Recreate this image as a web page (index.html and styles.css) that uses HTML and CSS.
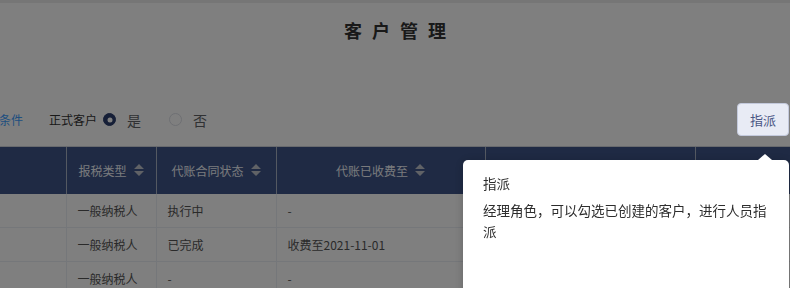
FILE: index.html
```html
<!DOCTYPE html>
<html lang="zh-CN">
<head>
  <meta charset="UTF-8" />
  <title>客户管理</title>
  <link rel="stylesheet" href="styles.css">
</head>
<body>

  <div class="page">
    <div class="top-line"></div>
    <h1 class="page-title">客户管理</h1>

    <div class="filter-bar">
      <a class="filter-link">条件</a>
      <span class="filter-label">正式客户</span>
      <label class="radio checked"><span class="radio-dot"></span><span class="radio-text">是</span></label>
      <label class="radio"><span class="radio-dot"></span><span class="radio-text">否</span></label>
      <button class="btn-assign">指派</button>
    </div>

    <div class="table-wrap">
      <table class="customer-table">
        <colgroup>
          <col style="width: 66px">
          <col style="width: 90px">
          <col style="width: 120px">
          <col style="width: 209px">
          <col style="width: 210px">
          <col style="width: 200px">
        </colgroup>
        <thead>
          <tr>
            <th></th>
            <th><span class="th-cell">报税类型<svg class="sort" viewBox="0 0 10 12"><path d="M5 0 L10 5 L0 5 Z M0 7 L10 7 L5 12 Z"/></svg></span></th>
            <th><span class="th-cell">代账合同状态<svg class="sort" viewBox="0 0 10 12"><path d="M5 0 L10 5 L0 5 Z M0 7 L10 7 L5 12 Z"/></svg></span></th>
            <th><span class="th-cell">代账已收费至<svg class="sort" viewBox="0 0 10 12"><path d="M5 0 L10 5 L0 5 Z M0 7 L10 7 L5 12 Z"/></svg></span></th>
            <th></th>
            <th></th>
          </tr>
        </thead>
        <tbody>
          <tr><td></td><td>一般纳税人</td><td>执行中</td><td>-</td><td></td><td></td></tr>
          <tr><td></td><td>一般纳税人</td><td>已完成</td><td>收费至2021-11-01</td><td></td><td></td></tr>
          <tr><td></td><td>一般纳税人</td><td>-</td><td>-</td><td></td><td></td></tr>
        </tbody>
      </table>
    </div>
  </div>

  <!-- 引导遮罩 -->
  <div class="guide-overlay"></div>
  <div class="guide-popover">
    <div class="guide-title">指派</div>
    <div class="guide-desc">经理角色，可以勾选已创建的客户，进行人员指派</div>
  </div>

</body>
</html>
```

FILE: styles.css
```css
* { margin: 0; padding: 0; box-sizing: border-box; }
html, body {
  height: 100%;
  overflow: hidden;
  background: #fff;
  font-family: 'Noto Sans CJK SC', 'Noto Sans', sans-serif;
  color: #606266;
}

.top-line {
  height: 3px;
  background: #ececec;
}

.page-title {
  margin-top: 14px;
  text-align: center;
  font-size: 18px;
  line-height: 26px;
  font-weight: bold;
  letter-spacing: 10px;
  padding-left: 10px;
  color: #333;
}

.filter-bar {
  display: flex;
  align-items: center;
  height: 33px;
  margin-top: 60px;
  padding-right: 1px;
}

.filter-link {
  color: #409eff;
  font-size: 12px;
  margin-left: -1px;
}

.filter-label {
  margin-left: 26px;
  font-size: 12px;
  color: #333;
}

.radio {
  display: flex;
  align-items: center;
  margin-left: 6px;
  font-size: 14px;
  color: #606266;
}
.radio + .radio { margin-left: 28px; }

.radio-dot {
  width: 13px;
  height: 13px;
  border-radius: 50%;
  border: 1px solid #dcdfe6;
  background: #fff;
  margin-right: 11px;
}
.radio.checked .radio-dot {
  background: #2c3e6e;
  border-color: #2c3e6e;
  position: relative;
}
.radio.checked .radio-dot::after {
  content: '';
  position: absolute;
  left: 50%; top: 50%;
  width: 5px; height: 5px;
  border-radius: 50%;
  background: #fff;
  transform: translate(-50%, -50%);
}

.btn-assign {
  margin-left: auto;
  width: 52px;
  height: 33px;
  border: 1px solid #c3c9dc;
  border-radius: 4px;
  background: #e8ebf5;
  color: #4a5584;
  font-family: inherit;
  font-size: 13px;
  position: relative;
  z-index: 1001;
}

.table-wrap {
  margin-top: 10px;
  width: 100%;
  overflow: hidden;
}

.customer-table {
  width: 895px;
  table-layout: fixed;
  border-collapse: collapse;
  font-size: 12px;
}

.customer-table th {
  height: 47px;
  background: #3e5488;
  color: #f2f5fa;
  font-weight: normal;
  text-align: center;
  border-left: 1px solid #a9b2c4;
  border-top: 1px solid #d0d4dc;
}
.customer-table th:first-child { border-left: none; }

.th-cell {
  display: inline-flex;
  align-items: center;
  gap: 7px;
  white-space: nowrap;
}

.sort {
  width: 10px;
  height: 12px;
  fill: #c0c4cc;
  flex-shrink: 0;
}

.customer-table td {
  height: 34px;
  padding-left: 11px;
  border-left: 1px solid #ebeef5;
  border-bottom: 1px solid #ebeef5;
  color: #555;
  white-space: nowrap;
}
.customer-table td:first-child { border-left: none; }

.guide-overlay {
  position: fixed;
  top: 0; left: 0; right: 0; bottom: 0;
  background: rgba(0, 0, 0, 0.5);
  z-index: 1000;
}

.guide-popover {
  position: fixed;
  left: 463px;
  top: 159.5px;
  width: 326px;
  min-height: 160px;
  padding: 15px 20px;
  background: #fff;
  border-radius: 5px;
  box-shadow: 0 1px 10px rgba(0, 0, 0, 0.2);
  z-index: 1002;
  color: #2d2d2d;
  font-size: 13.5px;
}
.guide-popover::before {
  content: '';
  position: absolute;
  top: -6px;
  left: 295px;
  border-left: 7px solid transparent;
  border-right: 7px solid transparent;
  border-bottom: 6px solid #fff;
}

.guide-title {
  line-height: 16px;
}

.guide-desc {
  margin-top: 9px;
  line-height: 21px;
}
```
